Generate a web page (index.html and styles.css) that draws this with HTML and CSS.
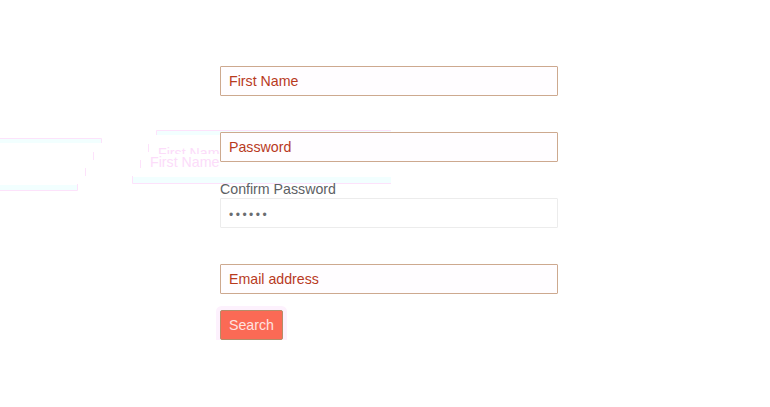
FILE: index.html
```html
<!DOCTYPE html>
<html lang="en">
<head>
  <meta charset="UTF-8" />
  <meta name="viewport" content="width=device-width, initial-scale=1.0"/>
  <title>Sign up</title>
  <link rel="stylesheet" href="styles.css">
</head>
<body>

  <!-- faint leftovers of the transition behind the form -->
  <svg class="ghost" width="400" height="200" viewBox="0 0 400 200" aria-hidden="true">
    <g class="ghost-fill">
      <rect x="0" y="139" width="101" height="4"/>
      <rect x="0" y="185" width="77" height="5"/>
      <rect x="156" y="131" width="235" height="4"/>
      <rect x="132" y="177" width="259" height="6"/>
    </g>
    <g class="ghost-line">
      <path d="M0 138.5H101.5V143"/>
      <path d="M93.5 152V160"/>
      <path d="M85.5 168V176"/>
      <path d="M0 190.5H77.5V184"/>
      <path d="M156.5 135V130.5H391"/>
      <path d="M148.5 144V152"/>
      <path d="M140.5 160V168"/>
      <path d="M132.5 176V183.5H391"/>
    </g>
    <clipPath id="ghostClip"><rect x="150" y="146" width="70" height="8"/></clipPath>
    <text class="ghost-text" x="158" y="158" clip-path="url(#ghostClip)">First Name</text>
    <text class="ghost-text" x="150" y="167">First Name</text>
  </svg>

  <form class="signup-form">
    <div class="field">
      <input class="invalid" type="text" placeholder="First Name" />
    </div>
    <div class="field">
      <input class="invalid" type="password" placeholder="Password" />
    </div>
    <div class="field">
      <label for="confirm">Confirm Password</label>
      <input id="confirm" class="dots" type="password" value="secret" />
    </div>
    <div class="field">
      <input class="invalid" type="email" placeholder="Email address" />
    </div>
    <button type="submit">Search</button>
  </form>

</body>
</html>
```

FILE: styles.css
```css
* {
  margin: 0;
  padding: 0;
  box-sizing: border-box;
}

body {
  font-family: "Liberation Sans", Arial, sans-serif;
  font-size: 14.2px;
  background: #fff;
  color: #5d6164;
  overflow: hidden;
}

.ghost {
  position: absolute;
  top: 0;
  left: 0;
}

.ghost-fill {
  fill: #f2ffff;
}

.ghost-line path {
  fill: none;
  stroke: #fde2fb;
  stroke-width: 1;
}

.ghost-text {
  fill: #fcdcfa;
  font-size: 14.2px;
}

.signup-form {
  position: relative;
  width: 338px;
  margin-left: 220px;
  padding-top: 30px;
}

.field {
  display: flex;
  flex-direction: column;
  justify-content: flex-end;
  height: 66px;
}

label {
  line-height: 17px;
}

input {
  width: 100%;
  height: 30px;
  padding: 0 8px;
  font-family: inherit;
  font-size: inherit;
  color: #55595c;
  background: #fff;
  border: 1px solid #ececec;
  border-radius: 1px;
  outline: none;
}

input.dots {
  padding-top: 4px;
  font-size: 12px;
  letter-spacing: 2.5px;
  color: #6a6d70;
}

input.invalid {
  background: #fffdff;
  border-color: #cda98f;
}

input.invalid::placeholder {
  color: #b83a1e;
  opacity: 1;
}

button {
  display: block;
  width: 63px;
  height: 30px;
  margin-top: 16px;
  font-family: inherit;
  font-size: inherit;
  color: #ffe3e0;
  background: #fb6a55;
  border: 1px solid #b58c68;
  border-radius: 2px;
  box-shadow: 0 0 0 4px #fdf1fd;
  cursor: pointer;
}
```
